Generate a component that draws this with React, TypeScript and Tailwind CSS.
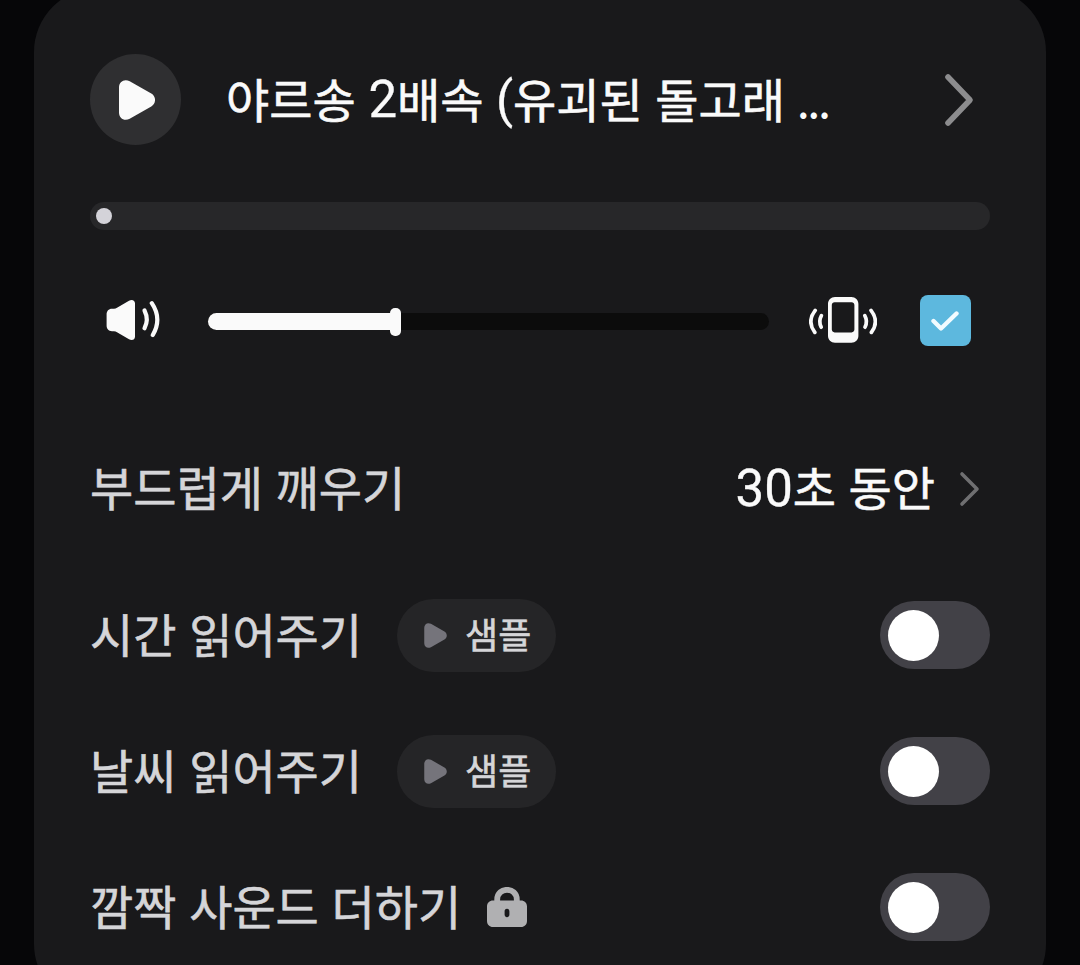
import React, { useState } from "react";
import clsx from "clsx";

type PlayIconProps = {
    className?: string;
};

const PlayIcon = ({ className }: PlayIconProps) => (
    <svg viewBox="0 0 36 40" className={className} fill="currentColor">
        <path d="M0 7.5C0 1.5 5.5-1.6 10.7 1.3L32.3 13.4C37.3 16.2 37.3 23.6 32.3 26.4L10.7 38.7C5.5 41.6 0 38.5 0 32.5Z" />
    </svg>
);

const SpeakerIcon = () => (
    <svg viewBox="0 0 54 42" className="w-[54px] h-[42px] text-[#fafafa]" fill="none" stroke="currentColor">
        <path
            d="M6 9.8H8C9.2 9.8 10 9.4 11 8.8L23 1.8C26 0 29 1.4 29 4.6V37.4C29 40.6 26 42 23 40.2L11 33.2C10 32.6 9.2 32.2 8 32.2H6C2.6 32.2 0.6 29.8 0.6 26.6V15.4C0.6 12.2 2.6 9.8 6 9.8Z"
            fill="currentColor"
            stroke="none"
        />
        <path d="M38.5 11.5C41.4 17.4 41.4 23.8 38.5 29.2" strokeWidth="4.2" strokeLinecap="round" />
        <path d="M45.8 4.2C52.8 14.6 52.8 25.8 46.8 36" strokeWidth="4.2" strokeLinecap="round" />
    </svg>
);

const VibrateIcon = () => (
    <svg viewBox="0 0 68 46" className="w-[68px] h-[46px] text-[#fafafa]" fill="none" stroke="currentColor">
        <path
            d="M26 0H42.4C46.4 0 49.4 3 49.4 7V38.8C49.4 42.8 46.4 45.8 42.4 45.8H26C22 45.8 19 42.8 19 38.8V7C19 3 22 0 26 0ZM25.6 5.2C24 5.2 22.8 6.4 22.8 8V32.6C22.8 34.2 24 35.4 25.6 35.4H42.6C44.2 35.4 45.4 34.2 45.4 32.6V8C45.4 6.4 44.2 5.2 42.6 5.2Z"
            fill="currentColor"
            fillRule="evenodd"
            stroke="none"
        />
        <g strokeWidth="3.7" strokeLinecap="round">
            <path d="M6.2 13.4C.6 20.6.6 28.4 5.8 35.4" />
            <path d="M12.4 18.6C10.2 22.6 10.2 26.2 12.2 30.2" />
            <path d="M55.8 18.6C58 22.6 58 26.2 56 30.2" />
            <path d="M62 13.4C67.6 20.6 67.6 28.4 62.4 35.4" />
        </g>
    </svg>
);

const LockIcon = () => (
    <svg viewBox="0 0 40 40" className="size-10 text-[#b0b0b2]">
        <path d="M10.2 16V12.5C10.2-.4 29.8-.4 29.8 12.5V16" fill="none" stroke="currentColor" strokeWidth="5.8" />
        <path
            d="M6 13.5H34C37.5 13.5 40 16 40 19.5V34C40 37.5 37.5 40 34 40H6C2.5 40 0 37.5 0 34V19.5C0 16 2.5 13.5 6 13.5ZM20 21.8C18.4 21.8 17.6 23 17.6 24.4V27.6C17.6 29 18.4 30.2 20 30.2C21.6 30.2 22.4 29 22.4 27.6V24.4C22.4 23 21.6 21.8 20 21.8Z"
            fill="currentColor"
            fillRule="evenodd"
        />
    </svg>
);

const Switch = () => {
    const [on, setOn] = useState<boolean>(false);

    return (
        <button
            role="switch"
            aria-checked={on}
            onClick={() => setOn((prev) => !prev)}
            className={clsx(
                "flex items-center w-[110px] h-[68px] rounded-full px-2",
                on ? "justify-end bg-[#5db8de]" : "bg-[#424147]"
            )}
        >
            <span className="size-[51px] rounded-full bg-white" />
        </button>
    );
};

const rows = [
    { label: "시간 읽어주기", sample: true },
    { label: "날씨 읽어주기", sample: true },
    { label: "깜짝 사운드 더하기", sample: false },
];

const App = () => {
    const [volume] = useState<number>(187);

    return (
        <div className="h-[965px] overflow-hidden bg-[#060608] px-[34px] font-['Roboto','Noto_Sans_CJK_KR',sans-serif] [-webkit-text-stroke:0.6px]">
            <div className="-mt-3 h-[1020px] rounded-[64px] bg-[#19191b] px-14 pt-[66px]">
                <div className="flex items-center h-[91px]">
                    <button className="flex items-center justify-center size-[91px] rounded-full bg-[#2f2f31] text-[#fafafa]">
                        <PlayIcon className="w-9 h-10 ml-[3px]" />
                    </button>
                    <p className="ml-[45px] text-[47px] leading-[60px] whitespace-pre text-[#fafafa]">
                        야르송<span className="text-[51px] align-[1px] [-webkit-text-stroke:0.3px]"> 2</span>배속
                        <span className="text-[50px] align-[1px] [-webkit-text-stroke:0.3px]"> (</span>유괴된
                        <span className="text-[50px]"> </span>돌고래
                        <span className="text-[47px]"> </span>
                        <span className="font-['Noto_Sans_CJK_KR'] tracking-[-2.4px] [-webkit-text-stroke:0px]">...</span>
                    </p>
                    <svg viewBox="0 0 30 54" className="w-[30px] h-[54px] ml-auto mr-4 text-[#8c8c8e]">
                        <path d="M4 4L26 27L4 50" fill="none" stroke="currentColor" strokeWidth="5.6" strokeLinecap="round" strokeLinejoin="round" />
                    </svg>
                </div>

                <div className="flex items-center h-7 mt-[57px] rounded-full bg-[#272729] pl-1.5">
                    <span className="size-4 rounded-full bg-[#d4d3d9]" />
                </div>

                <div className="flex items-center h-[51px] mt-[65px] pl-4">
                    <div className="pb-0.5">
                        <SpeakerIcon />
                    </div>
                    <div className="flex items-center w-[561px] h-[17px] ml-12 mt-px rounded-full bg-[#0c0c0c]">
                        <div className="h-full rounded-l-full bg-[#fafafa]" style={{ width: volume }} />
                        <div className="w-[11px] h-7 -ml-[5px] mt-px rounded-[5px] bg-[#fafafa]" />
                    </div>
                    <div className="ml-10 pb-0.5">
                        <VibrateIcon />
                    </div>
                    <div className="flex items-center justify-center size-[51px] ml-[43px] rounded-lg bg-[#5db8de]">
                        <svg viewBox="0 0 28 20" className="w-7 h-5 mr-0.5">
                            <path d="M2.5 10L10 17.5L25.5 2.5" fill="none" stroke="#f2fbff" strokeWidth="4.4" strokeLinecap="round" strokeLinejoin="round" />
                        </svg>
                    </div>
                </div>

                <div className="flex items-center h-[68px] mt-[108px]">
                    <p className="pt-1 text-[47px] leading-[60px] [word-spacing:1px] text-[#d5d5d8]">부드럽게 깨우기</p>
                    <p className="ml-auto pt-[3px] text-[47px] leading-[60px] whitespace-pre text-[#fafafa]">
                        <span className="text-[51px] [-webkit-text-stroke:0.3px]">30</span>초
                        <span className="text-[50px]"> </span>동안
                    </p>
                    <svg viewBox="0 0 22 36" className="w-[22px] h-9 ml-6 mr-[9px] mt-px text-[#6f6f71]">
                        <path d="M3 3L18 18L3 33" fill="none" stroke="currentColor" strokeWidth="3.6" strokeLinecap="round" strokeLinejoin="round" />
                    </svg>
                </div>

                <div className="flex flex-col gap-[68px] mt-[79px]">
                    {rows.map((row) => (
                        <div key={row.label} className="flex items-center h-[68px]">
                            <p className="pt-1 text-[47px] leading-[60px] [word-spacing:1px] text-[#d5d5d8]">{row.label}</p>
                            {row.sample ? (
                                <button className="flex items-center w-[159px] h-[73px] ml-[35px] rounded-full bg-[#252527] pl-[27px] text-[#75747b]">
                                    <PlayIcon className="w-[23px] h-[25px] mt-px" />
                                    <span className="ml-[18px] pt-1 text-[36px] leading-[46px] text-[#d5d5d8]">샘플</span>
                                </button>
                            ) : (
                                <div className="ml-[26px]">
                                    <LockIcon />
                                </div>
                            )}
                            <div className="ml-auto">
                                <Switch />
                            </div>
                        </div>
                    ))}
                </div>
            </div>
        </div>
    );
};

export default App;
